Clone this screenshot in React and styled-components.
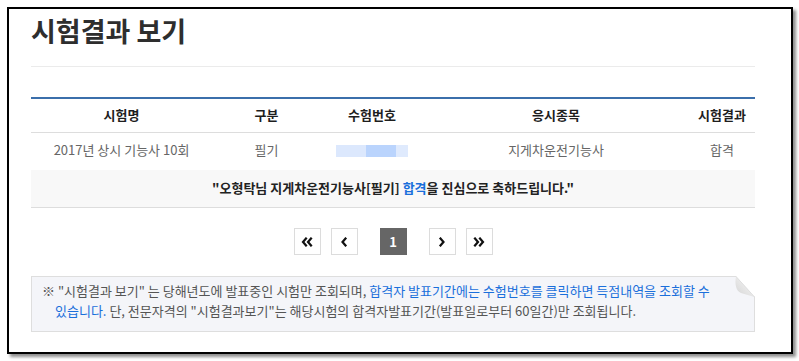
import { createGlobalStyle } from 'styled-components';
import styled from 'styled-components';

const GlobalStyle = createGlobalStyle`
    body {
        margin: 0;
        background: #fff;
        font-family: 'Noto Sans CJK KR', 'Noto Sans', sans-serif;
    }
`;

const columns = [
    { label: '시험명', width: 181 },
    { label: '구분', width: 109 },
    { label: '수험번호', width: 102 },
    { label: '응시종목', width: 266 },
    { label: '시험결과', width: 66 },
];

const Chevron = ({ dir = 'left', double = false }) => {
    const flip = dir === 'right' ? 'scale(-1,1) translate(-12,0)' : undefined;
    return (
        <svg width="12" height="10" viewBox="0 0 12 10">
            <g transform={flip} fill="none" stroke="#111" strokeWidth="2.2" strokeLinecap="square">
                {double ? (
                    <>
                        <polyline points="5,1.5 2,5 5,8.5" />
                        <polyline points="10,1.5 7,5 10,8.5" />
                    </>
                ) : (
                    <polyline points="7.5,1.5 4.5,5 7.5,8.5" />
                )}
            </g>
        </svg>
    );
};

export default function App() {
    return (
        <>
            <GlobalStyle />
            <Page>
                <Frame>
                    <Content>
                        <Title>시험결과 보기</Title>
                        <Divider />
                        <Table>
                            <colgroup>
                                {columns.map((c) => (
                                    <col key={c.label} style={{ width: c.width }} />
                                ))}
                            </colgroup>
                            <thead>
                                <tr>
                                    {columns.map((c) => (
                                        <Th key={c.label}>{c.label}</Th>
                                    ))}
                                </tr>
                            </thead>
                            <tbody>
                                <tr>
                                    <Td>2017년 상시 기능사 10회</Td>
                                    <Td>필기</Td>
                                    <Td>
                                        <Masked />
                                    </Td>
                                    <Td>지게차운전기능사</Td>
                                    <Td>합격</Td>
                                </tr>
                                <tr>
                                    <Congrats colSpan={5}>
                                        "오형탁님 지게차운전기능사[필기] <Blue>합격</Blue>을 진심으로 축하드립니다."
                                    </Congrats>
                                </tr>
                            </tbody>
                        </Table>
                        <Pager>
                            <PageGroup>
                                <PageButton>
                                    <Chevron double />
                                </PageButton>
                                <PageButton>
                                    <Chevron />
                                </PageButton>
                            </PageGroup>
                            <PageButton $active>1</PageButton>
                            <PageGroup>
                                <PageButton>
                                    <Chevron dir="right" />
                                </PageButton>
                                <PageButton>
                                    <Chevron dir="right" double />
                                </PageButton>
                            </PageGroup>
                        </Pager>
                        <Notice>
                            <NoticeText>
                                ※ "시험결과 보기" 는 당해년도에 발표중인 시험만 조회되며,{' '}
                                <Blue>합격자 발표기간에는 수험번호를 클릭하면 득점내역을 조회할 수</Blue>
                                <br />
                                <Blue>있습니다.</Blue> 단, 전문자격의 "시험결과보기"는 해당시험의 합격자발표기간(발표일로부터 60일간)만 조회됩니다.
                            </NoticeText>
                            <Fold width="24" height="24" viewBox="0 0 24 24">
                                <defs>
                                    <linearGradient id="curl" x1="0" y1="1" x2="1" y2="0">
                                        <stop offset="0" stopColor="#d4d4d4" />
                                        <stop offset="0.6" stopColor="#ececec" />
                                        <stop offset="1" stopColor="#fafafa" />
                                    </linearGradient>
                                </defs>
                                <polygon points="5,0 24,0 24,21" fill="#fff" />
                                <path d="M5,0.5 C3.5,8 5,15 10,17 L23.5,21 Z" fill="url(#curl)" />
                                <line x1="5" y1="0.5" x2="23.5" y2="21" stroke="#dedede" strokeWidth="1" />
                            </Fold>
                        </Notice>
                    </Content>
                </Frame>
            </Page>
        </>
    );
}

const Page = styled.div`
    padding: 7px;
`;

const Frame = styled.div`
    box-sizing: border-box;
    width: 786px;
    height: 347px;
    border: 2px solid #000;
    box-shadow: 3px 3px 3px rgba(0, 0, 0, 0.45);
    background: #fff;
`;

const Content = styled.div`
    padding: 0 36px 0 22px;
`;

const Title = styled.h1`
    margin: 0;
    padding-top: 8px;
    font-size: 27px;
    line-height: 27px;
    font-weight: 700;
    color: #2e2e2e;
`;

const Divider = styled.div`
    height: 1px;
    margin-top: 22px;
    background: #ebebeb;
`;

const Table = styled.table`
    width: 100%;
    margin-top: 30px;
    border-collapse: collapse;
    table-layout: fixed;
    border-top: 2px solid #3b6fab;
    font-size: 13px;
`;

const Th = styled.th`
    height: 30px;
    padding: 0 0 3px;
    border-bottom: 1px solid #dddddd;
    font-weight: 700;
    color: #1e1e1e;
    text-align: center;
`;

const Td = styled.td`
    height: 33px;
    padding: 0 0 4px;
    color: #666;
    text-align: center;
`;

const Masked = styled.span`
    display: inline-block;
    vertical-align: middle;
    width: 72px;
    height: 12px;
    background: linear-gradient(
        to right,
        #dce8fd 0,
        #dce8fd 30px,
        #bad4fd 30px,
        #bad4fd 60px,
        #dfeafd 60px
    );
`;

const Congrats = styled.td`
    height: 35px;
    padding: 0 0 2px;
    background: #f8f8f8;
    border-bottom: 1px solid #dddddd;
    font-weight: 700;
    color: #222;
    text-align: center;
`;

const Blue = styled.span`
    color: #1a6fdb;
`;

const Pager = styled.div`
    display: flex;
    justify-content: center;
    gap: 22px;
    margin-top: 20px;
`;

const PageGroup = styled.div`
    display: flex;
    gap: 10px;
`;

const PageButton = styled.span`
    box-sizing: border-box;
    display: flex;
    align-items: center;
    justify-content: center;
    width: 27px;
    height: 27px;
    border: 1px solid ${({ $active }) => ($active ? '#666' : '#dcdcdc')};
    background: ${({ $active }) => ($active ? '#666' : '#fff')};
    color: #fff;
    font-size: 13px;
    font-weight: 700;
`;

const Notice = styled.div`
    position: relative;
    box-sizing: border-box;
    height: 56px;
    margin-top: 21px;
    padding: 4px 20px 0 10px;
    background: #f4f5f9;
    border: 1px solid #dedede;
`;

const NoticeText = styled.p`
    margin: 0;
    padding-left: 13px;
    text-indent: -13px;
    font-size: 13px;
    line-height: 20px;
    color: #555;
    white-space: nowrap;
`;

const Fold = styled.svg`
    position: absolute;
    top: -1px;
    right: -1px;
`;
